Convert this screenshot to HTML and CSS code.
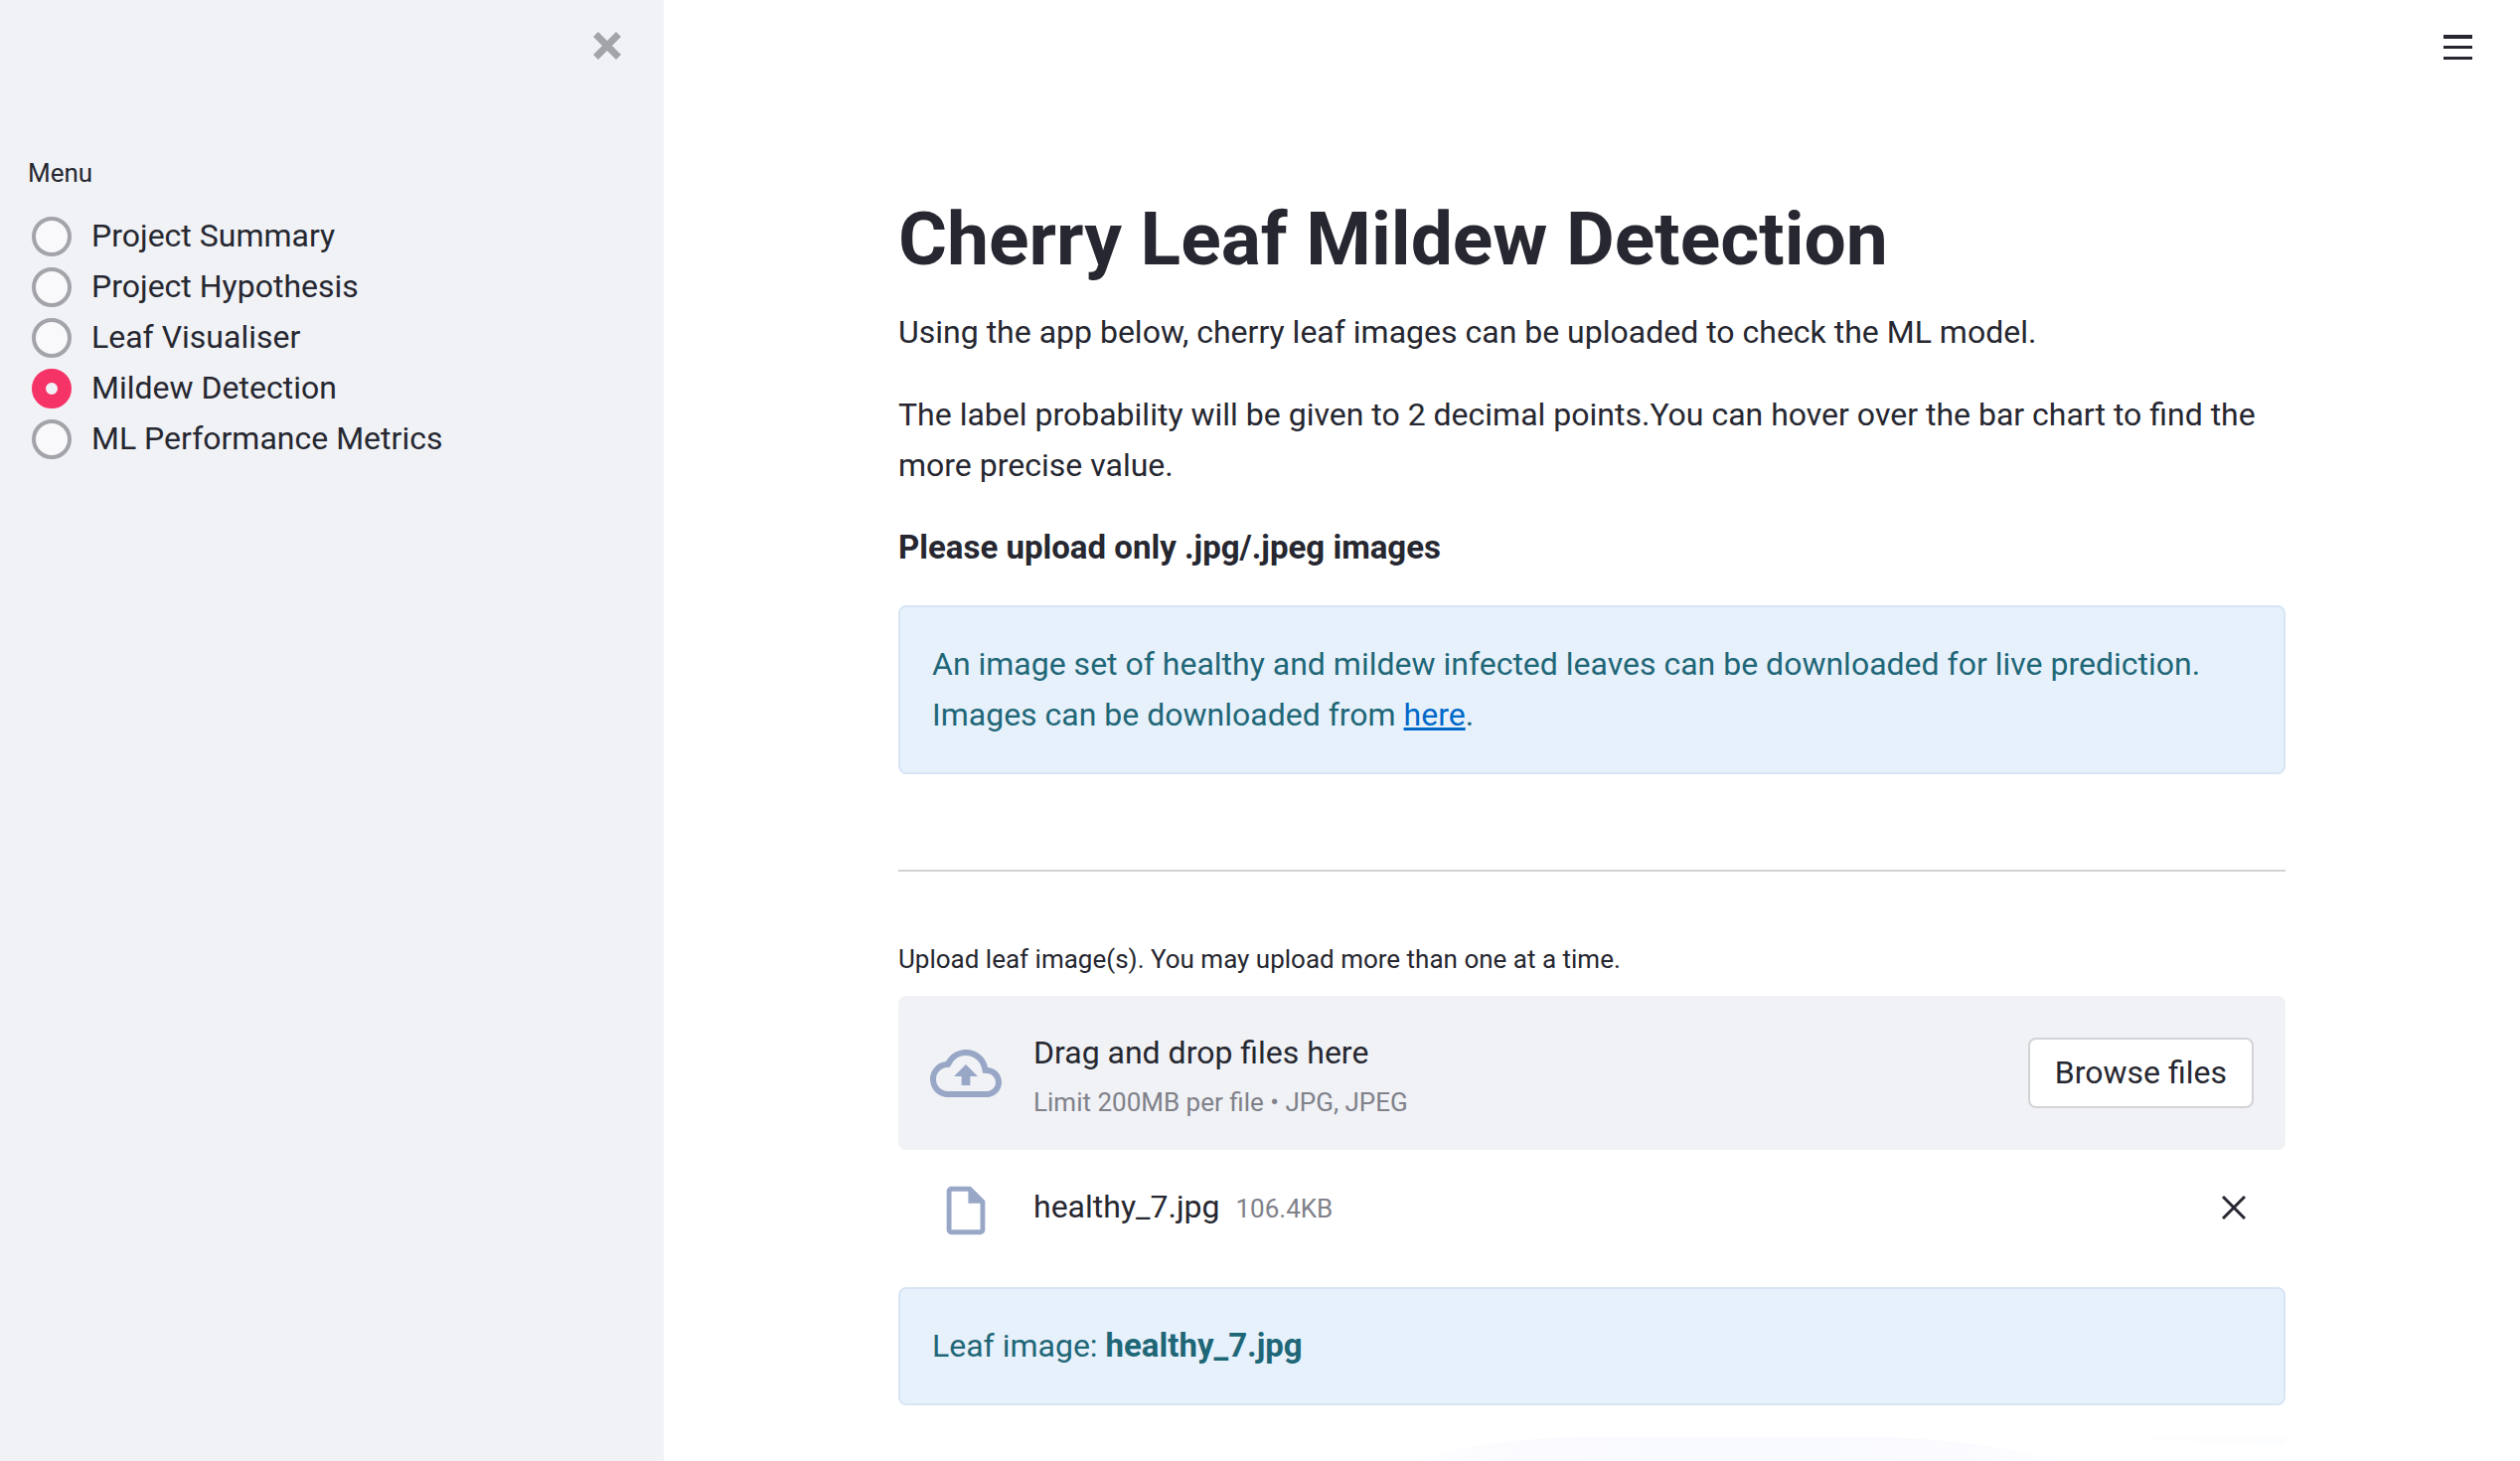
FILE: index.html
```html
<!DOCTYPE html>
<html lang="en">
<head>
<meta charset="utf-8">
<title>Cherry Leaf Mildew Detection</title>
<link rel="stylesheet" href="styles.css">
</head>
<body>
<div class="app">
  <aside class="sidebar">
    <div class="sidebar-top">
      <button class="icon-button sidebar-close" type="button" aria-label="Close sidebar">
        <svg width="28" height="28" viewBox="0 0 28 28" fill="none" stroke="currentColor" stroke-width="7"><path d="M2.5 2.5l23 23M25.5 2.5l-23 23"/></svg>
      </button>
    </div>
    <fieldset class="menu">
      <legend class="small-label">Menu</legend>
      <label class="option"><input type="radio" name="page"><span>Project Summary</span></label>
      <label class="option"><input type="radio" name="page"><span>Project Hypothesis</span></label>
      <label class="option"><input type="radio" name="page"><span>Leaf Visualiser</span></label>
      <label class="option"><input type="radio" name="page" checked><span>Mildew Detection</span></label>
      <label class="option"><input type="radio" name="page"><span>ML Performance Metrics</span></label>
    </fieldset>
  </aside>
  <main class="main">
    <header class="toolbar">
      <button class="icon-button" type="button" aria-label="Main menu">
        <svg width="29" height="25" viewBox="0 0 29 25" fill="currentColor"><path d="M0 0h29v4H0zM0 11h29v3H0zM0 22h29v3H0z"/></svg>
      </button>
    </header>
    <div class="content">
      <h1>Cherry Leaf Mildew Detection</h1>
      <div class="intro">
        <p>Using the app below, cherry leaf images can be uploaded to check the ML model.</p>
        <p>The label probability will be given to 2 decimal points.You can hover over the bar chart to find the more precise value.</p>
        <p><strong>Please upload only .jpg/.jpeg images</strong></p>
        <div class="alert">An image set of healthy and mildew infected leaves can be downloaded for live prediction. Images can be downloaded from <a href="#">here</a>.</div>
      </div>
      <hr>
      <label class="small-label upload-label" for="files">Upload leaf image(s). You may upload more than one at a time.</label>
      <section class="dropzone">
        <input class="file-input" id="files" type="file" multiple accept=".jpg,.jpeg">
        <svg class="cloud" width="72" height="72" viewBox="0 0 24 24" fill="currentColor"><path d="M19.35 10.04A7.49 7.49 0 0012 4C9.11 4 6.6 5.64 5.35 8.04A5.994 5.994 0 000 14c0 3.31 2.69 6 6 6h13c2.76 0 5-2.24 5-5 0-2.64-2.05-4.78-4.65-4.96zM19 18H6c-2.21 0-4-1.79-4-4 0-2.05 1.53-3.76 3.56-3.97l1.07-.11.5-.95A5.469 5.469 0 0112 6c2.62 0 4.88 1.86 5.39 4.43l.3 1.5 1.53.11A2.98 2.98 0 0122 15c0 1.65-1.35 3-3 3zM8 13h2.55v3h2.9v-3H16l-4-4z"/></svg>
        <div class="drop-text">
          <span>Drag and drop files here</span>
          <small>Limit 200MB per file • JPG, JPEG</small>
        </div>
        <button class="browse" type="button">Browse files</button>
      </section>
      <div class="file">
        <div class="file-icon">
          <svg width="58" height="58" viewBox="0 0 24 24" fill="currentColor"><path d="M6 2c-1.1 0-1.99.9-1.99 2L4 20c0 1.1.89 2 1.99 2H18c1.1 0 2-.9 2-2V8l-6-6H6zm0 18V4h7v5h5v11z"/></svg>
        </div>
        <div class="file-name"><span>healthy_7.jpg</span><small>106.4KB</small></div>
        <button class="icon-button file-remove" type="button" aria-label="Remove healthy_7.jpg">
          <svg width="24" height="24" viewBox="0 0 24 24" fill="none" stroke="currentColor" stroke-width="3"><path d="M1 1l22 22M23 1L1 23"/></svg>
        </button>
      </div>
      <div class="alert">Leaf image: <strong>healthy_7.jpg</strong></div>
      <svg class="leaf" viewBox="0 0 1396 24" role="img" aria-label="Leaf image">
        <defs><linearGradient id="fade"><stop offset="0" stop-color="#fefeff"/><stop offset=".2" stop-color="#fafaff"/><stop offset=".5" stop-color="#f8fafd"/><stop offset=".8" stop-color="#fafaff"/><stop offset="1" stop-color="#fefeff"/></linearGradient></defs>
        <path fill="url(#fade)" d="M524 24Q570 4 680 0H1000Q1110 6 1170 24z"/>
        <path fill="#fcfdfe" d="M1240 0h156v9q-60-2-156-9z"/>
      </svg>
    </div>
  </main>
</div>
</body>
</html>
```
FILE: styles.css
```css
* { box-sizing: border-box; }

body {
  margin: 0;
  background: #fff;
  color: #262730;
  font-family: Roboto, "Liberation Sans", sans-serif;
  font-size: 32px;
  line-height: 51px;
}

button, input { font: inherit; color: inherit; }
svg { display: block; }
p { margin: 0; }
strong { font-size: 33px; line-height: 1; font-weight: 700; }

.app { display: flex; min-height: 100vh; }

.sidebar {
  flex: 0 0 668px;
  background: #f0f2f6;
}

.sidebar-top {
  display: flex;
  justify-content: flex-end;
  height: 152px;
  padding: 32px 43px;
}

.icon-button {
  display: flex;
  align-items: center;
  justify-content: center;
  align-self: flex-start;
  padding: 0;
  border: 0;
  background: none;
}

.sidebar-close { color: #a3a4aa; }

.menu { margin: 0; padding: 0 28px; border: 0; }

.small-label {
  display: block;
  padding: 0;
  font-size: 26px;
  line-height: 45px;
}

.menu .small-label { margin-bottom: 15px; }

.option {
  display: flex;
  align-items: center;
  gap: 20px;
  padding-left: 4px;
}

.option input {
  appearance: none;
  width: 40px;
  height: 40px;
  margin: 0;
  border: 4px solid #a3a4aa;
  border-radius: 50%;
  background: #f9f9fb;
}

.option input:checked {
  border: 14px solid #f63366;
  background: #f0f2f6;
}

.main { flex: 1; min-width: 0; }

.toolbar {
  display: flex;
  justify-content: flex-end;
  height: 96px;
  padding: 35px 48px;
}

.content {
  max-width: 1460px;
  margin: 0 auto;
  padding: 101px 32px 0;
}

h1 {
  margin: 0 0 26px;
  font-size: 75px;
  line-height: 86px;
  font-weight: 700;
}

.intro { display: flex; flex-direction: column; gap: 32px; }

.alert {
  padding: 32px;
  border: 2px solid #d7e5f5;
  border-radius: 8px;
  background: #e7f1fc;
  color: #1f6777;
}

.alert a { color: #0068c9; text-decoration-thickness: 3px; }

hr {
  margin: 96px 0 66px;
  border: 0;
  border-top: 2px solid #d3d3d5;
}

.upload-label { margin-bottom: 14px; }

.dropzone {
  display: flex;
  align-items: center;
  gap: 32px;
  min-height: 155px;
  padding: 0 32px;
  border-radius: 8px;
  background: #f0f2f6;
}

.file-input { display: none; }

.cloud, .file-icon { color: #98a7c6; }

.drop-text {
  display: flex;
  flex: 1;
  flex-direction: column;
  gap: 4px;
  padding-top: 4px;
}

small { color: #808189; font-size: 26px; line-height: 40px; }

.browse {
  height: 71px;
  padding: 0 25px;
  border: 2px solid #d3d3d7;
  border-radius: 8px;
  background: #fff;
}

.file {
  display: flex;
  align-items: flex-start;
  gap: 32px;
  padding: 32px 32px 48px;
}

.file-icon { display: flex; justify-content: center; width: 72px; }

.file-name { display: flex; flex: 1; align-items: baseline; gap: 16px; }

.file-remove { width: 40px; height: 51px; }

.leaf { width: 100%; margin-top: 32px; }
```
